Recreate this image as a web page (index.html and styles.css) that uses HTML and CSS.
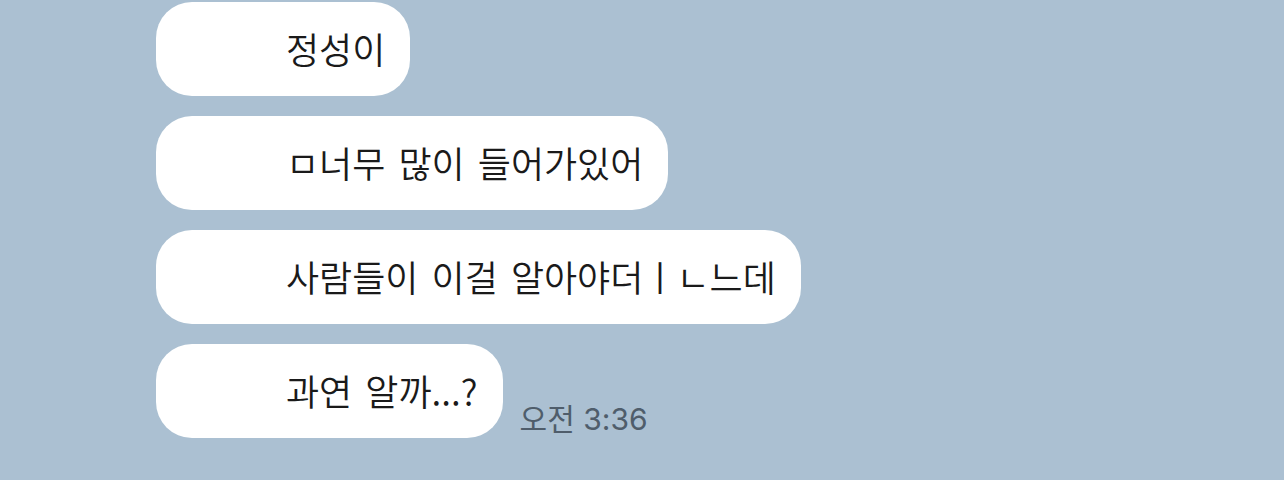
FILE: index.html
```html
<!DOCTYPE html>
<html lang="ko">
<head>
    <meta charset="UTF-8">
    <meta name="viewport" content="width=device-width, initial-scale=1.0">
    <title>채팅</title>
    <link rel="stylesheet" href="styles.css">
</head>
<body>
    <div class="chat">
        <div class="row">
            <div class="bubble">정성이</div>
        </div>
        <div class="row">
            <div class="bubble">ㅁ너무 많이 들어가있어</div>
        </div>
        <div class="row">
            <div class="bubble">사람들이 이걸 알아야더ㅣㄴ느데</div>
        </div>
        <div class="row">
            <div class="bubble">과연 알까...?</div>
            <span class="time">오전 3:36</span>
        </div>
    </div>
</body>
</html>
```

FILE: styles.css
```css
body {
    margin: 0;
    padding: 0;
    background-color: #abc0d2;
    font-family: "Noto Sans CJK KR", "Noto Sans", sans-serif;
}
.chat {
    display: flex;
    flex-direction: column;
    gap: 20px;
    padding: 2px 0 0 156px;
}
.row {
    display: flex;
    align-items: flex-end;
    gap: 17px;
}
.bubble {
    background-color: #fff;
    color: #1a1a1a;
    font-size: 36px;
    font-weight: 350;
    word-spacing: 3px;
    line-height: 50px;
    height: 50px;
    padding: 21px 25px 23px 130px;
    border-radius: 36px;
}
.time {
    color: #4f5d6b;
    font-family: Inter, "Noto Sans CJK KR", sans-serif;
    font-size: 30px;
    line-height: 36px;
    margin-bottom: 1px;
}
```
